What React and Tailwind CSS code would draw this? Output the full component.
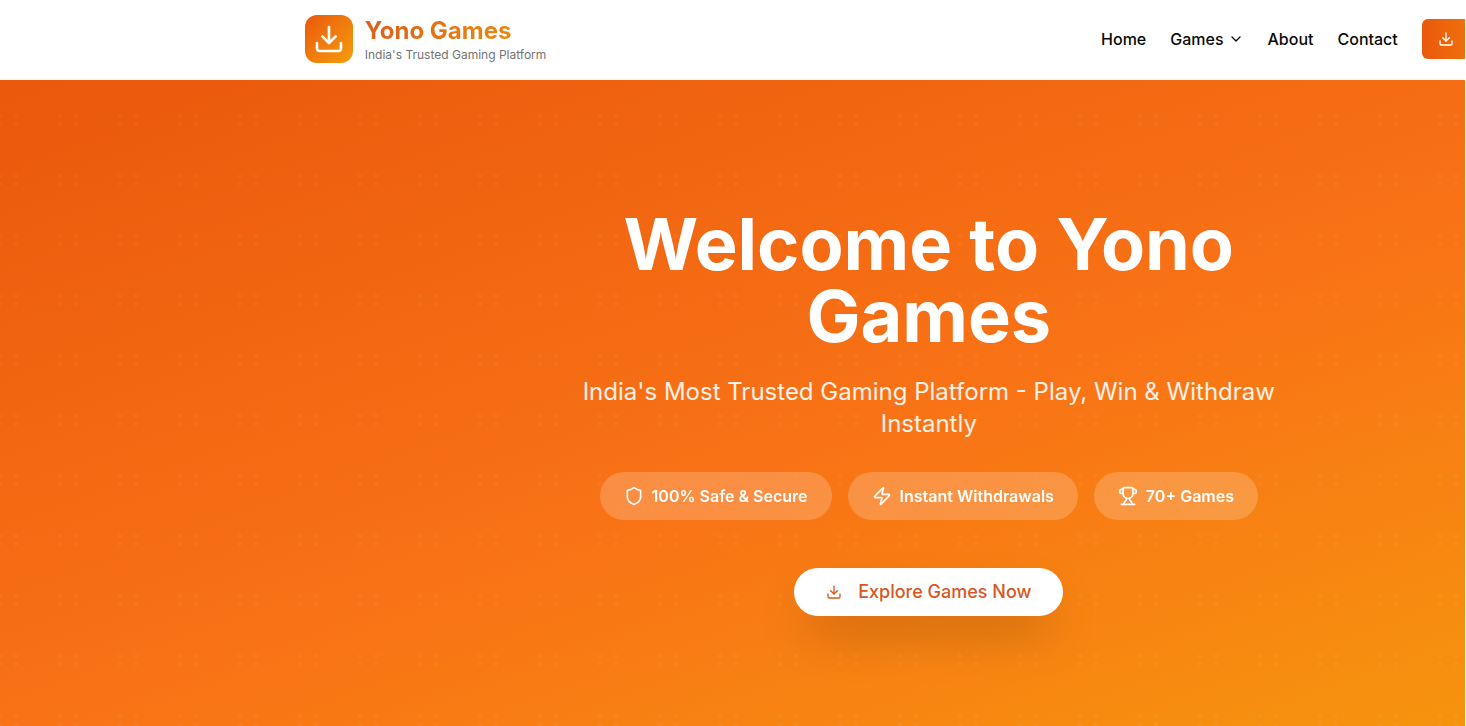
import React from "react";
import { ChevronDown, Shield, Trophy, Zap } from "lucide-react";

function DownloadIcon({ className }) {
  return (
    <svg
      className={className}
      viewBox="0 0 24 24"
      fill="none"
      stroke="currentColor"
      strokeWidth="2"
      strokeLinecap="round"
      strokeLinejoin="round"
      aria-hidden="true"
    >
      <path d="M12 3v12" />
      <path d="m7 10 5 5 5-5" />
      <path d="M21 15v4a2 2 0 0 1-2 2H5a2 2 0 0 1-2-2v-4" />
    </svg>
  );
}

function Header() {
  return (
    <header className="h-20 border-b-2 border-[#fafafa] bg-white">
      <div className="mx-auto flex h-full max-w-7xl items-center justify-between px-4">
        <a href="#home" className="flex items-center gap-3">
          <span className="flex size-12 items-center justify-center rounded-xl bg-linear-to-br/srgb from-[#ea580c] to-[#f59e0b] text-white">
            <DownloadIcon className="size-8" />
          </span>
          <span className="flex flex-col">
            <span className="bg-linear-to-r/srgb from-[#d9601a] to-[#ee930f] bg-clip-text text-2xl font-bold text-transparent">
              Yono Games
            </span>
            <span className="text-xs text-[#737373]">India's Trusted Gaming Platform</span>
          </span>
        </a>
        <nav className="flex items-center gap-6 font-medium text-[#0a0a0a]">
          <a href="#home">Home</a>
          <button type="button" className="flex items-center gap-1">
            Games
            <ChevronDown className="size-4" />
          </button>
          <a href="#about">About</a>
          <a href="#contact">Contact</a>
          <a
            href="#download"
            aria-label="Download"
            className="flex h-10 w-[131px] items-center rounded-md bg-linear-to-r/srgb from-[#ea580c] to-[#f59e0b] px-4 text-white"
          >
            <DownloadIcon className="size-4" />
          </a>
        </nav>
      </div>
    </header>
  );
}

function HeroPattern() {
  return (
    <svg className="absolute inset-0 size-full text-white opacity-3" aria-hidden="true">
      <defs>
        <pattern id="dots" x="-2" width="60" height="60" patternUnits="userSpaceOnUse">
          <path
            fill="currentColor"
            d="M0 34h4v4H0zM16 34h4v4h-4zM0 42h4v4H0zM16 42h4v4h-4z"
          />
        </pattern>
      </defs>
      <rect width="100%" height="100%" fill="url(#dots)" />
    </svg>
  );
}

const badges = [
  { icon: Shield, label: "100% Safe & Secure" },
  { icon: Zap, label: "Instant Withdrawals" },
  { icon: Trophy, label: "70+ Games" },
];

function Hero() {
  return (
    <section className="relative bg-linear-to-br/srgb from-[#ea580c] via-[#f97316] to-[#f59e0b] px-4 py-32 text-white">
      <HeroPattern />
      <div className="relative mx-auto flex max-w-3xl flex-col items-center text-center">
        <h1 className="mb-6 text-7xl leading-none font-bold">Welcome to Yono Games</h1>
        <p className="mb-8 text-2xl text-white/90">
          India's Most Trusted Gaming Platform - Play, Win &amp; Withdraw Instantly
        </p>
        <ul className="mb-12 flex gap-4">
          {badges.map(({ icon: Icon, label }) => (
            <li
              key={label}
              className="flex items-center gap-2 rounded-full bg-white/20 px-6 py-3 font-semibold backdrop-blur-sm"
            >
              <Icon className="size-5" />
              {label}
            </li>
          ))}
        </ul>
        <a
          href="#games"
          className="flex h-12 items-center gap-4 rounded-full bg-white px-8 text-lg font-medium text-[#d9571e] shadow-2xl"
        >
          <DownloadIcon className="size-4" />
          Explore Games Now
        </a>
      </div>
    </section>
  );
}

export default function App() {
  return (
    <div className="h-screen overflow-hidden bg-white pr-px font-['Inter',sans-serif]">
      <div className="h-full overflow-hidden">
        <div className="w-[126.8%]">
          <Header />
          <Hero />
        </div>
      </div>
    </div>
  );
}
